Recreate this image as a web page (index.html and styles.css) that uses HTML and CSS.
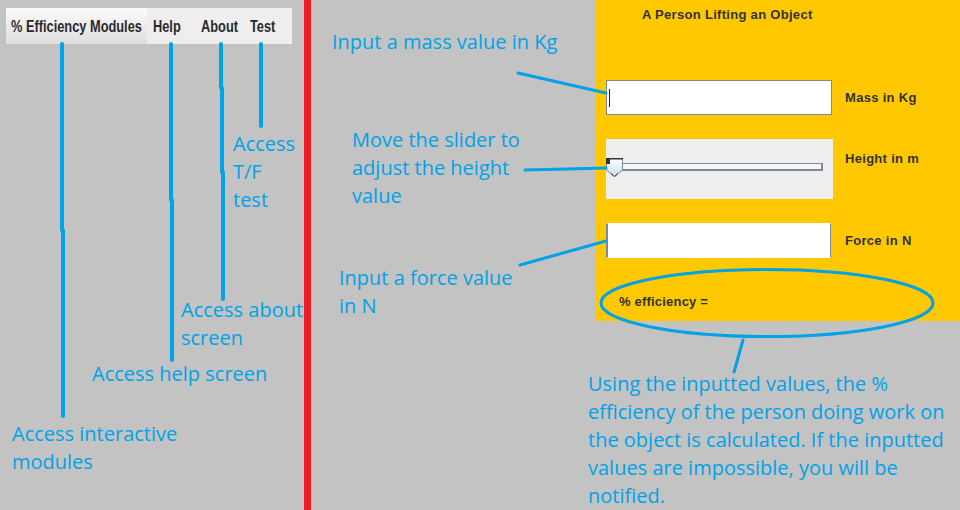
FILE: index.html
```html
<!DOCTYPE html>
<html>
<head>
<meta charset="utf-8">
<link rel="stylesheet" href="styles.css">
</head>
<body>
<div class="page">
  <div class="left">
    <nav class="menubar">
      <div class="menu-item menu-first"><span class="menu-text">% Efficiency Modules</span></div>
      <div class="menu-item menu-help"><span class="menu-text">Help</span></div>
      <div class="menu-item menu-about"><span class="menu-text">About</span></div>
      <div class="menu-item menu-test"><span class="menu-text">Test</span></div>
    </nav>
  </div>
  <div class="divider"></div>
  <div class="spacer"></div>
  <section class="panel">
    <h1 class="panel-title">A Person Lifting an Object</h1>
    <div class="row row-mass">
      <div class="field field-mass"><span class="caret"></span></div>
      <span class="label">Mass in Kg</span>
    </div>
    <div class="row row-slider">
      <div class="slider">
        <div class="track"></div>
        <svg class="thumb" width="18" height="20" viewBox="0 0 18 20">
          <defs>
            <linearGradient id="tg" x1="0" y1="0" x2="0" y2="1">
              <stop offset="0" stop-color="#ffffff"/>
              <stop offset="1" stop-color="#c9dcef"/>
            </linearGradient>
          </defs>
          <path d="M0.5 0.5 H16.5 V12 L8.5 18.5 L0.5 12 Z" fill="url(#tg)" stroke="#7a8a99"/>
          <rect x="0" y="0" width="4" height="6" fill="#333"/>
          <rect x="0" y="0" width="17" height="1.5" fill="#333"/>
          <path d="M5 15.5 L8.5 18.5 L12 15.5" fill="none" stroke="#333" stroke-width="1"/>
        </svg>
      </div>
      <span class="label label-top">Height in m</span>
    </div>
    <div class="row row-force">
      <div class="field field-force"></div>
      <span class="label">Force in N</span>
    </div>
    <div class="result">% efficiency =</div>
  </section>
</div>

<div class="notes">
  <svg class="note-lines" width="960" height="510" viewBox="0 0 960 510">
    <g stroke="#00a2e8" fill="none" stroke-linecap="round">
      <path d="M62 44 V230 M63 230 V416" stroke-width="4"/>
      <path d="M171 44 V200 M172 200 V360" stroke-width="4"/>
      <path d="M221 44 V88 M222 88 V172 M223 172 V299" stroke-width="4"/>
      <path d="M261 44 V126" stroke-width="4"/>
      <path d="M518 73 L606 93" stroke-width="3"/>
      <path d="M525 170 L566 169 L606 168" stroke-width="3"/>
      <path d="M520 265 L606 241" stroke-width="3"/>
      <ellipse cx="767" cy="303" rx="166" ry="33.5" stroke-width="3"/>
      <path d="M743 340 L734 372" stroke-width="3"/>
    </g>
  </svg>
  <p class="note note-test">Access
T/F
test</p>
  <p class="note note-about">Access about
screen</p>
  <p class="note note-help">Access help screen</p>
  <p class="note note-modules">Access interactive
modules</p>
  <p class="note note-mass">Input a mass value in Kg</p>
  <p class="note note-slider">Move the slider to
adjust the height
value</p>
  <p class="note note-force">Input a force value
in N</p>
  <p class="note note-result">Using the inputted values, the %
efficiency of the person doing work on
the object is calculated. If the inputted
values are impossible, you will be
notified.</p>
</div>
</body>
</html>
```

FILE: styles.css
```css
html, body {
  margin: 0;
  padding: 0;
}
body {
  width: 960px;
  height: 510px;
  overflow: hidden;
  background: #c3c3c3;
  position: relative;
  font-family: "Liberation Sans", Arial, sans-serif;
}
.page {
  display: flex;
  height: 510px;
}
.left {
  width: 298px;
  padding: 8px 0 0 6px;
}
.menubar {
  display: flex;
  width: 286px;
  height: 36px;
  background: #eeeeee;
}
.menu-item {
  font-family: "Liberation Sans", Arial, sans-serif;
  font-weight: bold;
  font-size: 16px;
  color: #2a2a2e;
  line-height: 34px;
  padding-top: 2px;
  padding-left: 6px;
  box-sizing: border-box;
  white-space: nowrap;
}
.menu-text {
  display: inline-block;
  transform: scaleX(0.8);
  transform-origin: left center;
}
.menu-first {
  width: 141px;
  padding-left: 5px;
  background: linear-gradient(#fbfbfb, #dedede);
}
.menu-help { width: 48px; }
.menu-about { width: 49px; }
.menu-test { width: 48px; }

.divider {
  width: 7px;
  background: #ed1c24;
}
.spacer {
  flex: 1;
}
.panel {
  width: 364px;
  height: 321px;
  background: #ffc800;
  box-sizing: border-box;
  padding: 7px 0 0 10px;
  display: flex;
  flex-direction: column;
  color: #333333;
}
.panel-title {
  margin: 0 0 0 36px;
  font-size: 13px;
  line-height: 15px;
  font-weight: bold;
  letter-spacing: 0.3px;
}
.row {
  display: flex;
  align-items: center;
  gap: 12px;
}
.row-mass { margin-top: 58px; }
.row-slider { margin-top: 24px; align-items: flex-start; }
.row-force { margin-top: 24px; }
.label {
  font-size: 13px;
  font-weight: bold;
  letter-spacing: 0.3px;
  line-height: 15px;
}
.label-top {
  margin-top: 12px;
}
.field {
  background: #ffffff;
  box-sizing: border-box;
}
.field-mass {
  width: 226px;
  height: 35px;
  margin-right: 1px;
  border: 1px solid #7a8a99;
  display: flex;
  align-items: center;
  padding-left: 2px;
}
.caret {
  width: 1px;
  height: 18px;
  background: #222;
}
.field-force {
  width: 225px;
  height: 35px;
  margin-right: 2px;
  border-left: 2px solid #7a8a99;
  border-right: 1px solid #7a8a99;
  border-top: 1px solid #fff;
  border-bottom: 1px solid #fff;
}
.slider {
  position: relative;
  width: 227px;
  height: 60px;
  background: #eeeeee;
  box-sizing: border-box;
  padding: 24px 0 0 3px;
}
.track {
  width: 214px;
  height: 8px;
  box-sizing: border-box;
  border: 1px solid #7a8a99;
  border-width: 1px 2px 2px 1px;
  background: #f6f6f6;
}
.thumb {
  position: absolute;
  left: 0;
  top: 19px;
}
.result {
  margin: 36px 0 0 13px;
  font-size: 13px;
  font-weight: bold;
  letter-spacing: 0.2px;
  line-height: 15px;
}

.notes {
  position: absolute;
  left: 0;
  top: 0;
  width: 960px;
  height: 510px;
  pointer-events: none;
}
.note-lines {
  position: absolute;
  left: 0;
  top: 0;
}
.note {
  position: absolute;
  margin: 0;
  white-space: pre;
  font-family: "Open Sans", "Noto Sans", sans-serif;
  font-size: 20px;
  line-height: 28px;
  color: #00a2e8;
}
.note-test { left: 233px; top: 130px; }
.note-about { left: 181px; top: 296px; }
.note-help { left: 92px; top: 360px; }
.note-modules { left: 12px; top: 420px; }
.note-mass { left: 332px; top: 28px; }
.note-slider { left: 352px; top: 126px; }
.note-force { left: 339px; top: 264px; }
.note-result { left: 588px; top: 370px; }
```
